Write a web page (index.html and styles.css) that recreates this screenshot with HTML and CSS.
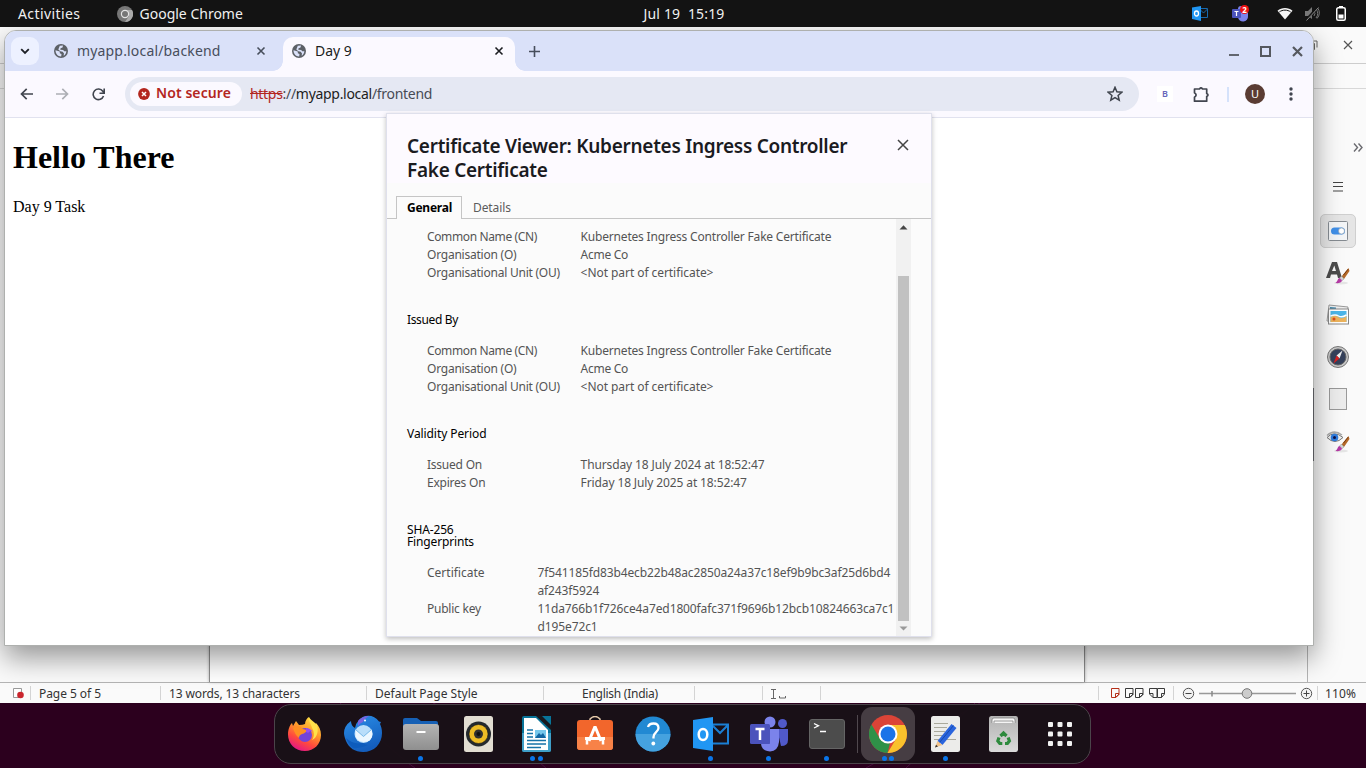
FILE: index.html
```html
<!DOCTYPE html>
<html lang="en">
<head>
<meta charset="utf-8">
<title>Desktop</title>
<link rel="stylesheet" href="styles.css">
</head>
<body>
<svg width="0" height="0" class="defs">
  <defs>
    <symbol id="globe" viewBox="0 0 14 14"><circle cx="7" cy="7" r="7" fill="#5c6066"/><path d="M1.500 6.300 5.800 7.400 5.800 9.200 7.500 10 7.200 12.400C4 12.500 1.500 10 1.500 6.300zM5.800 1.700 9 1.600 8.500 3.500 6.600 4.200 6.300 5.800 9.200 6 10.200 7.300 12.400 7.300C12 10 10.800 11.200 9.600 11.700L10 9.400 8.700 7.700 6.300 7.300 4.300 5.500z" fill="#dae1f9"/></symbol>
    <symbol id="x" viewBox="0 0 10 10"><path d="m1.500 1.500 7 7M8.500 1.500l-7 7" fill="none" stroke="currentColor" stroke-width="1.600"/></symbol>
    <symbol id="page" viewBox="0 0 9 11"><path d="M.5.500h7.500v6L5 9.500H.5zM8 5.500H4.500v4M8 6 4.500 9.500" fill="none" stroke="currentColor"/></symbol>
    <symbol id="brush" viewBox="0 0 14 16"><path d="M13 0 6 8.500l2.500 2.500 5.500-8z" fill="#b46a2a"/><path d="M12.800 1 8 7" stroke="#7b3d10"/><path d="m6 8-2 2 2.500 2.500L8.500 11z" fill="#d5d5d5" stroke="#888" stroke-width=".5"/><path d="M4 10c-2 .5-1.500 3-4 5 3 .5 6-.3 6.500-2.500z" fill="#b53aa5"/></symbol>
    <linearGradient id="fox" x1=".8" y1="0" x2=".3" y2="1"><stop offset="0" stop-color="#ffe646"/><stop offset=".4" stop-color="#ff9a2b"/><stop offset=".7" stop-color="#ff4a3d"/><stop offset="1" stop-color="#e2148a"/></linearGradient>
    <linearGradient id="bird" x1="0" y1="0" x2=".4" y2="1"><stop offset="0" stop-color="#2b8fe8"/><stop offset="1" stop-color="#145ebd"/></linearGradient>
    <linearGradient id="grey" x1="0" y1="0" x2="0" y2="1"><stop offset="0" stop-color="#b4b4b4"/><stop offset="1" stop-color="#8f8f8f"/></linearGradient>
    <linearGradient id="bin" x1="0" y1="0" x2="0" y2="1"><stop offset="0" stop-color="#b2b2b2"/><stop offset="1" stop-color="#dadada"/></linearGradient>
  </defs>
</svg>

<header class="topbar">
  <span class="top-activities">Activities</span>
  <svg class="top-chrome" width="16" height="16" viewBox="0 0 16 16"><circle cx="8" cy="8" r="8" fill="#777"/><path d="M8 4h7a8 8 0 0 1-7 12l4-6z" fill="#aaa"/><circle cx="8" cy="8" r="4.200" fill="#e5e5e5"/><circle cx="8" cy="8" r="3" fill="#777"/></svg>
  <span class="top-app">Google Chrome</span>
  <span class="top-clock">Jul 19&nbsp; 15:19</span>
  <div class="tray">
    <svg class="tray-outlook" width="16" height="15" viewBox="0 0 16 15"><path d="M7 2.500h8.500v9H7M7.500 3l4 4 4-4" fill="none" stroke="#1769ad"/><path d="M0 1.500 9 0v15L0 13z" fill="#2096f3"/><ellipse cx="4.500" cy="7.500" rx="2" ry="2.500" fill="none" stroke="#fff" stroke-width="1.300"/></svg>
    <svg class="tray-teams" width="17" height="17" viewBox="0 0 17 17"><circle cx="9" cy="4" r="3" fill="#7b83eb"/><path d="M6 6h10v5a5 5 0 0 1-10 1z" fill="#7b83eb"/><rect y="4" width="9" height="9" rx="1" fill="#4b53bc"/><path d="M2.500 6.500h4M4.500 6.500V11" stroke="#fff" stroke-width="1.200"/><circle cx="12.500" cy="4.500" r="4.500" fill="#ee1111"/><text x="12.500" y="7.500" class="badge">2</text></svg>
    <svg class="tray-wifi" width="16" height="13" viewBox="0 0 16 13"><path d="M.5 3.700C4.500 0 11.500 0 15.500 3.700L8 12.500z" fill="#f5f5f5"/><path d="M2.300 5C5.500 2.500 10.500 2.500 13.700 5" fill="none" stroke="#131313" stroke-width="1"/></svg>
    <svg class="tray-mute" width="15" height="15" viewBox="0 0 15 15"><path d="M0 5h3l4-4v12L3 10H0z" fill="#777"/><path d="M9 5q2 2.500 0 5M11 3q3.500 4.500 0 9M12.500 1.500q4 6-.5 11" fill="none" stroke="#777"/><path d="M1 14 13 1" stroke="#131313" stroke-width="2.500"/><path d="M1.500 14.500 13.500 1.500" stroke="#888"/></svg>
    <svg class="tray-battery" width="10" height="15" viewBox="0 0 10 15"><path d="M3 0h4v2H3z" fill="#fff"/><rect x=".75" y="1.750" width="8.500" height="12.500" rx="1.500" fill="none" stroke="#fff" stroke-width="1.500"/><path d="M2.500 8.500h5v4h-5z" fill="#fff"/></svg>
  </div>
</header>

<main class="desktop">
  <section class="writer">
    <div class="writer-title">
      <svg width="10" height="10" viewBox="0 0 10 10"><path d="M.5 3.500h6v6h-6zM2.500 1h6.500v6.500" fill="none" stroke="#666"/></svg>
      <svg class="writer-x" width="10" height="10" viewBox="0 0 10 10"><path d="m1 1 8 8M9 1 1 9" stroke="#555" stroke-width="1.200"/></svg>
    </div>
    <div class="writer-menu"></div>
    <div class="writer-main">
      <div class="canvas"><div class="sheet"></div></div>
      <aside class="sidebar">
        <svg class="side-more" width="10" height="9" viewBox="0 0 10 9"><path d="m1 .5 3.500 4L1 8.500M5.500.5l3.500 4-3.500 4" fill="none" stroke="#6b6b70" stroke-width="1.400"/></svg>
        <svg class="side-menu" width="10" height="10" viewBox="0 0 10 10"><path d="M0 .5h10M0 4.500h10M0 9h10" stroke="#444"/></svg>
        <div class="side-btn side-on"><svg width="20" height="20" viewBox="0 0 20 20"><rect x=".5" y=".5" width="19" height="19" rx="1" fill="#f3f5f7" stroke="#858b91"/><rect x="3" y="6.500" width="14" height="7" rx="3.500" fill="#3f8fe8"/><circle cx="13.500" cy="10" r="3" fill="#fff" stroke="#8a9aaa" stroke-width=".6"/></svg></div>
        <div class="side-btn"><svg width="24" height="24" viewBox="0 0 24 24"><ellipse cx="15" cy="22" rx="7" ry="1.500" fill="#e5e5e5"/><path d="M0 17 6 1h5l5 16h-4l-1-3.500H5L4 17zM6 10h4L8.300 4.500z" fill="#4c4c4c"/><use href="#brush" x="9" y="7" width="15" height="16"/></svg></div>
        <div class="side-btn"><svg width="24" height="22" viewBox="0 0 24 22"><path d="M3 1 22 3l-2 16L1 17z" fill="#eee" stroke="#999"/><path d="m4 3 6 .5v4H4z" fill="#4089ae"/><rect x="2.500" y="5" width="20" height="15" fill="#fff" stroke="#888"/><rect x="4.500" y="7" width="16" height="11" fill="#4bb5e8"/><path d="M4.500 13q5-3 8 0t8-1v6h-16z" fill="#ecb35c"/><path d="M4.500 12q5-2 8 0t8-1" fill="none" stroke="#fff" stroke-width="1.500"/><circle cx="8" cy="15" r="1.500" fill="#df4b1c"/></svg></div>
        <div class="side-btn"><svg width="22" height="22" viewBox="0 0 22 22"><circle cx="11" cy="11" r="10.500" fill="#c9c9c9" stroke="#777"/><circle cx="11" cy="11" r="8" fill="#35415b" stroke="#666"/><path d="m15.500 4.500-6 5 3 3z" fill="#eee"/><path d="m6.500 17.500 3-8 3 3z" fill="#d92020"/></svg></div>
        <div class="side-btn"><svg width="18" height="22" viewBox="0 0 18 22"><rect x=".5" y=".5" width="17" height="21" fill="#ececec" stroke="#999"/></svg></div>
        <div class="side-btn"><svg width="24" height="24" viewBox="0 0 24 24"><ellipse cx="15" cy="22" rx="7" ry="1.500" fill="#e5e5e5"/><path d="M1 8.500Q8 1 17 8.500q-8 8-16 0z" fill="#eee" stroke="#777"/><path d="M1 6.500Q8 0 16 6" fill="none" stroke="#aaa" stroke-width="1.500"/><circle cx="8.500" cy="8.500" r="3.800" fill="#2e7de0"/><circle cx="8.500" cy="8.500" r="1.500" fill="#114"/><use href="#brush" x="9" y="7" width="15" height="16"/></svg></div>
      </aside>
    </div>
    <footer class="status">
      <div class="st st-a"><svg width="11" height="11" viewBox="0 0 11 11"><path d="M.5 .5h8v9h-8z" fill="#fff" stroke="#999"/><circle cx="7.500" cy="7" r="3.300" fill="#c9252d"/></svg></div>
      <div class="st st-b">Page 5 of 5</div>
      <div class="st st-c">13 words, 13 characters</div>
      <div class="st st-d">Default Page Style</div>
      <div class="st st-e">English (India)</div>
      <div class="st st-f"></div>
      <div class="st st-g"><svg width="16" height="10" viewBox="0 0 16 10"><path d="M0 .5h5M2.500.5v9M0 9.500h5M8.500 7v2h6V7" fill="none" stroke="#666"/></svg></div>
      <div class="st st-h"></div>
      <div class="st st-i">
        <svg class="pg-red" width="9" height="11"><use href="#page"/></svg>
        <svg width="9" height="11"><use href="#page"/></svg>
        <svg width="9" height="11"><use href="#page"/></svg>
        <svg class="pg-book" width="17" height="11" viewBox="0 0 17 11"><path d="M8 .5H.5v5.500L4 9.500h4zM8.500.5h7v5.500L12.500 9.500h-4zM.5 5.500H4v4M15.500 5.500H12.500v4" fill="none" stroke="currentColor"/></svg>
      </div>
      <div class="st st-j">
        <svg width="131" height="13" viewBox="0 0 131 13"><g fill="#f2f2f2" stroke="#555"><circle cx="6.500" cy="6.500" r="5.200"/><circle cx="124.500" cy="6.500" r="5.200"/></g><path d="M3.500 6.500h6M121.500 6.500h6M124.500 3.500v6" stroke="#444"/><path d="M17 6.500h97" stroke="#999" stroke-width="1.500"/><path d="M30 4v5.500" stroke="#888" stroke-width="1.500"/><circle cx="65" cy="6.500" r="4.800" fill="#ccc" stroke="#777"/></svg>
      </div>
      <div class="st st-k">110%</div>
    </footer>
  </section>

  <section class="chrome">
    <div class="tabstrip">
      <div class="tabsearch"><svg width="10" height="7" viewBox="0 0 10 7"><path d="m1.200 1.200 3.800 3.800 3.800-3.800" fill="none" stroke="#1d2026" stroke-width="1.800"/></svg></div>
      <div class="tab">
        <svg width="14" height="14"><use href="#globe"/></svg>
        <span class="tab-title t1">myapp.local/backend</span>
        <svg class="tab-x" width="10" height="10"><use href="#x"/></svg>
      </div>
      <div class="tab tab-active">
        <svg width="14" height="14"><use href="#globe"/></svg>
        <span class="tab-title t2">Day 9</span>
        <svg class="tab-x" width="10" height="10"><use href="#x"/></svg>
      </div>
      <svg class="newtab" width="11" height="11" viewBox="0 0 11 11"><path d="M5.500 0v11M0 5.500h11" stroke="#474e5c" stroke-width="1.600"/></svg>
      <div class="winbtns">
        <svg width="10" height="12" viewBox="0 0 10 12"><path d="M0 10h10" stroke="#55585f" stroke-width="1.800"/></svg>
        <svg width="11" height="11" viewBox="0 0 11 11"><path d="M1 1h9v9H1z" fill="none" stroke="#55585f" stroke-width="2"/></svg>
        <svg width="11" height="11" viewBox="0 0 11 11"><path d="m1 1 9 9M10 1l-9 9" stroke="#55585f" stroke-width="2.200"/></svg>
      </div>
    </div>
    <div class="toolbar">
      <svg class="nav-back" width="13" height="12" viewBox="0 0 13 12"><path d="M13 6H1.500M6.700.8 1.500 6l5.200 5.200" fill="none" stroke="#41454f" stroke-width="1.700"/></svg>
      <svg class="nav-fwd" width="13" height="12" viewBox="0 0 13 12"><path d="M0 6h11.500M6.300.8 11.500 6l-5.200 5.200" fill="none" stroke="#adafb5" stroke-width="1.700"/></svg>
      <svg class="nav-reload" width="13" height="13" viewBox="0 0 13 13"><path d="M11.500 8A5.300 5.300 0 1 1 10.800 3.200L12 4.700M12.200.5v4.700H7.500" fill="none" stroke="#41454f" stroke-width="1.600"/></svg>
      <div class="omnibox">
        <div class="chip"><svg width="12" height="12" viewBox="0 0 12 12"><circle cx="6" cy="6" r="5.900" fill="#b3261e"/><path d="m4 4 4 4M8 4 4 8" stroke="#fff" stroke-width="1.500"/></svg><span>Not secure</span></div>
        <div class="url"><s>https</s>://<b>myapp.local</b>/frontend</div>
        <svg class="star" width="16" height="16" viewBox="0 0 16 16"><path d="m8 1.300 1.900 4.500 4.900.4-3.700 3.200 1.100 4.700L8 11.600l-4.200 2.500 1.100-4.700L1.200 6.200l4.900-.4z" fill="none" stroke="#3f444d" stroke-width="1.500"/></svg>
      </div>
      <div class="ext">B</div>
      <svg class="puzzle" width="17" height="17" viewBox="0 0 17 17"><path d="M1.500 3h5Q8 .8 9.500 3h4.200v4.500q2.600 1.500 0 3v4.700H1.500v-4q3.200-2.200 0-4.500z" fill="none" stroke="#41454f" stroke-width="1.700" stroke-linejoin="round"/></svg>
      <div class="tool-sep"></div>
      <div class="avatar">U</div>
      <svg class="kebab" width="4" height="14" viewBox="0 0 4 14"><g fill="#41454f"><circle cx="2" cy="2" r="1.700"/><circle cx="2" cy="7" r="1.700"/><circle cx="2" cy="12" r="1.700"/></g></svg>
    </div>
    <div class="webpage">
      <h1>Hello There</h1>
      <p>Day 9 Task</p>
    </div>

    <div class="dialog">
      <div class="dlg-head">
        <h2>Certificate Viewer: Kubernetes Ingress Controller<br>Fake Certificate</h2>
        <svg class="dlg-x" width="12" height="12" viewBox="0 0 12 12"><path d="m1 1 10 10M11 1 1 11" stroke="#444" stroke-width="1.500"/></svg>
      </div>
      <div class="dlg-tabs"><div class="dtab dtab-on">General</div><div class="dtab">Details</div></div>
      <div class="dlg-body">
        <div class="cert">
          <dl class="rows">
            <dt class="cn">Common Name (CN)</dt><dd class="kube">Kubernetes Ingress Controller Fake Certificate</dd>
            <dt class="org">Organisation (O)</dt><dd class="acme">Acme Co</dd>
            <dt class="ou">Organisational Unit (OU)</dt><dd>&lt;Not part of certificate&gt;</dd>
          </dl>
          <h3 class="issued">Issued By</h3>
          <dl class="rows">
            <dt class="cn">Common Name (CN)</dt><dd class="kube">Kubernetes Ingress Controller Fake Certificate</dd>
            <dt class="org">Organisation (O)</dt><dd class="acme">Acme Co</dd>
            <dt class="ou">Organisational Unit (OU)</dt><dd>&lt;Not part of certificate&gt;</dd>
          </dl>
          <h3>Validity Period</h3>
          <dl class="rows">
            <dt class="org">Issued On</dt><dd class="date">Thursday 18 July 2024 at 18:52:47</dd>
            <dt class="org">Expires On</dt><dd class="date">Friday 18 July 2025 at 18:52:47</dd>
          </dl>
          <h3 class="sha">SHA-256<br>Fingerprints</h3>
          <dl class="rows rows-sha">
            <dt>Certificate</dt><dd class="hash">7f541185fd83b4ecb22b48ac2850a24a37c18ef9b9bc3af25d6bd4<br>af243f5924</dd>
            <dt class="org">Public key</dt><dd class="hash">11da766b1f726ce4a7ed1800fafc371f9696b12bcb10824663ca7c1<br>d195e72c1</dd>
          </dl>
        </div>
        <div class="scroll">
          <svg width="9" height="5" viewBox="0 0 9 5"><path d="M4.500.3 8.500 4.500h-8z" fill="#444"/></svg>
          <div class="thumb"></div>
          <svg width="9" height="5" viewBox="0 0 9 5"><path d="M4.500 4.500.5.5h8z" fill="#999"/></svg>
        </div>
      </div>
    </div>
  </section>
  <div class="edge"></div>
</main>

<div class="shelf">
  <svg class="rays" width="1366" height="65" viewBox="0 0 1366 65"><g fill="none" stroke="#5d1553"><path d="M340 0q60 55 75 65M433 0q80 35 113 65M980 0 866 65M975 0 906 65"/></g></svg>
  <nav class="dock">
    <div class="app"><svg width="36" height="36" viewBox="0 0 36 36"><path d="M18 35C8 35 1 27.500 1 18.500 1 13 3 9 5 7l1 3 3-5 3 4q4 0 6-1c0-3 2-6 4-7 0 3 4 5 6 8l1-2c3 3 5 7 5 12 0 9-7 16-16 16z" fill="url(#fox)"/><path d="M22 1c-1 5 2 6 3 11 2 3 3 8 0 12 5-2 7-9 5-15-2-3-7-5-8-8z" fill="#ffe14a"/><circle cx="18" cy="19" r="7" fill="#7443d8"/><path d="M6 12q6-4 10 1l4 1q-1 3-5 4-3 1-3 4-4-3-6-10z" fill="#ff8f22"/><path d="M19 12q4 0 7 4-1-1-3-1-1 3-4 1z" fill="#9a4cf0"/></svg></div>
    <div class="app"><svg width="38" height="38" viewBox="0 0 38 38"><path d="M7 6Q0 11 0 18c0 3 1 5 2 8 3 7 9 11 17 11 11 0 19-8 19-19 0-4-1-7-2-9l1-2-2-.5C30-1 20-1 15 5q-3 3-4 8-4-2-4-7z" fill="url(#bird)"/><path d="M14 6q4-5 11-5-5 3-6 6-3 1-5 4z" fill="#7864df"/><circle cx="19.500" cy="19" r="9" fill="#b9defa"/><path d="m11.500 14.500 8 7 8-7q3 9-4 12-9 2-12-5z" fill="#edf8ff"/><path d="m11.500 14.500 8 7 8-7" fill="none" stroke="#76b8e9"/><path d="M2 23q7 7 17 5 2 2 5 2-8 4-15 3-5-4-7-10z" fill="#0e5cbc"/><circle cx="21" cy="5.500" r="1" fill="#fff"/></svg></div>
    <div class="app"><svg width="36" height="34" viewBox="0 0 36 34"><path d="M0 3q0-2 2-2h12l4 3h15q2 0 2 2v8H0z" fill="#1660b5"/><rect y="7" width="36" height="26" rx="3" fill="url(#grey)"/><path d="M13.500 15h9" stroke="#fff" stroke-width="2"/></svg><i></i></div>
    <div class="app"><svg width="29" height="36" viewBox="0 0 29 36"><rect width="29" height="36" rx="2.500" fill="#e2ded2"/><circle cx="14.500" cy="18" r="12.500" fill="#242a2e"/><circle cx="14.500" cy="18" r="9.500" fill="#edbc25" stroke="#111" stroke-width=".5"/><circle cx="14.500" cy="18" r="4.500" fill="#303030"/><circle cx="14.500" cy="18" r="2" fill="#111"/></svg></div>
    <div class="app"><svg width="29" height="36" viewBox="0 0 29 36"><path d="M2 0h25q2 0 2 2v32q0 2-2 2H2q-2 0-2-2V2q0-2 2-2z" fill="#087499"/><path d="M0 17h29v17q0 2-2 2H2q-2 0-2-2z" fill="#3f9fc8"/><path d="M2 2h12l12 12v20H2z" fill="#fff"/><path d="M14 0h6l9 9v5z" fill="#17191e"/><path d="M21 0h8v8z" fill="#087499"/><path d="M5 14h6M5 17.500h6M5 21h6M5 24.500h19M5 28h19M5 31.500h14" stroke="#1673a8" stroke-width="1.400"/><rect x="13" y="14" width="11" height="8" fill="#75c7eb"/><path d="m13 22 4-5 2 2 2-2 3 5z" fill="#1266a2"/></svg><i></i><i></i></div>
    <div class="app"><svg width="36" height="36" viewBox="0 0 36 36"><path d="M13 6V3q5-5 10 0v3" fill="none" stroke="#e5c9aa" stroke-width="1.500"/><rect y="4" width="36" height="30" rx="3" fill="#f2662c"/><path d="M0 21h36v10q0 3-3 3H3q-3 0-3-3z" fill="#f78248"/><g fill="none" stroke="#fff" stroke-width="3"><path d="M18 10.500 12 25M18 10.500 24 25M8 22.500h20"/><path d="M10 24v4.500M26 24v4.500" stroke-width="2.500"/></g></svg></div>
    <div class="app"><svg width="36" height="36" viewBox="0 0 36 36"><circle cx="18" cy="18" r="17.500" fill="#2189d3"/><path d="M.5 18h35a17.500 17.500 0 0 1-35 0z" fill="#45a2df"/><path d="M13 11q1-3.500 5.500-3.500 5 0 5 4.500c0 4-5 4.500-5 9v1.500" fill="none" stroke="#fff" stroke-width="2.300"/><circle cx="18.300" cy="27.500" r="1.900" fill="#fff"/></svg></div>
    <div class="app"><svg width="36" height="34" viewBox="0 0 36 34"><path d="M18 7.500h17v19H18M20 9l7 7 8-8" fill="none" stroke="#1b7fd4" stroke-width="2"/><path d="M0 3 20 0v34L0 31z" fill="#2196f3"/><ellipse cx="10" cy="17.500" rx="4.300" ry="5.500" fill="none" stroke="#fff" stroke-width="2.500"/></svg><i></i></div>
    <div class="app"><svg width="38" height="36" viewBox="0 0 38 36"><circle cx="20" cy="6" r="5.500" fill="#7b83eb"/><circle cx="32.500" cy="7.500" r="4.500" fill="#5059c9"/><path d="M27 13h11v11q0 6-7 6z" fill="#5059c9"/><path d="M11 13h18v13q-1 9-9 9.500-9-.5-9-9z" fill="#7b83eb"/><path d="M11 13h9v15h-9z" fill="#5f66c9"/><rect y="8" width="20" height="20" rx="1.500" fill="#4b53bc"/><path d="M5.500 13h9M10 13v11" stroke="#fff" stroke-width="2.500"/></svg><i></i></div>
    <div class="app"><svg width="36" height="30" viewBox="0 0 36 30"><rect x=".5" y=".5" width="35" height="29" rx="2.500" fill="#4c4c4c" stroke="#656565"/><path d="m5 4.500 4.500 2.300L5 9M11 12.500h6" fill="none" stroke="#fff" stroke-width="1.300"/></svg><i></i></div>
    <div class="dock-sep"></div>
    <div class="app app-on"><svg width="38" height="38" viewBox="0 0 38 38"><circle cx="19" cy="19" r="19" fill="#db4437"/><path d="M2.500 9.500 11 24q4 5 10 4l-2.500 10A19 19 0 0 1 2.500 9.500z" fill="#2f9148"/><path d="M19 10h16.700A19 19 0 0 1 18.500 38L27 24z" fill="#f9c12c"/><circle cx="19" cy="19" r="9.500" fill="#fff"/><circle cx="19" cy="19" r="7.500" fill="#1a73e8"/></svg><i></i><i></i></div>
    <div class="app"><svg width="29" height="36" viewBox="0 0 29 36"><rect width="29" height="36" rx="2.500" fill="#ececea"/><path d="M3 7.500h14M3 11.500h13M3 15.500h11M3 19.500h9M3 23.500h22" stroke="#aaa99c"/><path d="m20.500 8 5 4-14 17-5-4z" fill="#2b65dd"/><path d="m22.500 9.500-14 17" stroke="#174aaa"/><path d="m6.500 25 5 4-7.500 2.500z" fill="#f0c28b"/><path d="M4 31.500 5 28.800l2 1.600z" fill="#333"/></svg><i></i></div>
    <div class="app"><svg width="29" height="36" viewBox="0 0 29 36"><rect width="29" height="36" rx="2.500" fill="url(#bin)"/><path d="M3 7V4q0-2 2-2h19q2 0 2 2v3M5 7V5h19v2" fill="#f5f5f5" stroke="#777" stroke-width=".7"/><g fill="none" stroke="#2d8a3d" stroke-width="3.200"><path d="m11.500 20 3-3 3 3M10 21.500 8.800 25l2 2.500h2.500M19.200 21.500l1.200 3.500-2 2.500H16"/></g></svg></div>
    <div class="app app-grid"><svg width="24" height="24" viewBox="0 0 24 24"><g fill="#f2f2f2"><rect width="5" height="5" rx="1"/><rect x="9.500" width="5" height="5" rx="1"/><rect x="19" width="5" height="5" rx="1"/><rect y="9.500" width="5" height="5" rx="1"/><rect x="9.500" y="9.500" width="5" height="5" rx="1"/><rect x="19" y="9.500" width="5" height="5" rx="1"/><rect y="19" width="5" height="5" rx="1"/><rect x="9.500" y="19" width="5" height="5" rx="1"/><rect x="19" y="19" width="5" height="5" rx="1"/></g></svg></div>
  </nav>
</div>
</body>
</html>
```
FILE: styles.css
```css
* { box-sizing: border-box; }
body { margin: 0; width: 1366px; height: 768px; overflow: hidden; background: #2c001e; font-family: "Noto Sans", "Open Sans", sans-serif; }
svg { display: block; flex: none; }
.defs { position: absolute; }

.topbar { height: 27px; background: #131313; color: #f0f0f0; font-size: 14px; line-height: 27px; display: flex; align-items: center; padding-left: 18px; white-space: nowrap; }
.top-activities { letter-spacing: .4px; width: 99px; }
.top-chrome { margin-right: 6.5px; }
.top-app { width: 504px; }
.top-clock { letter-spacing: .17px; margin-bottom: 1px; }
.tray { margin-left: auto; display: flex; align-items: center; padding-right: 20px; }
.tray-teams { margin-left: 24px; margin-top: -1px; }
.tray-wifi { margin-left: 28px; }
.tray-mute { margin-left: 12px; }
.tray-battery { margin-left: 16px; margin-top: -1px; }
.badge { font: 700 8px "Noto Sans", sans-serif; fill: #fff; text-anchor: middle; }

.desktop { position: relative; height: 676px; overflow: hidden; }
.writer { height: 676px; display: flex; flex-direction: column; background: #fafafa; }
.writer-title { height: 37px; border-bottom: 1px solid #cdcdcd; display: flex; align-items: center; justify-content: flex-end; gap: 25px; padding-right: 13px; }
.writer-menu { height: 25px; border-bottom: 1px solid #d8d8d8; }
.writer-main { flex: 1; display: flex; border-bottom: 1px solid #b4b4b4; }
.canvas { width: 1308px; border-right: 1px solid #b4b4b4; display: flex; }
.sheet { margin-left: 209px; width: 876px; background: #fff; border: solid #8b8b8b; border-width: 0 1px; box-shadow: 0 0 3px rgba(0,0,0,.3); }
.sidebar { width: 58px; display: flex; flex-direction: column; align-items: center; padding: 54px 0 0 2px; gap: 8px; }
.side-more { align-self: flex-end; margin-right: 3px; }
.side-menu { margin: 22px 0 14px; }
.side-btn { width: 36px; height: 34px; display: flex; align-items: center; justify-content: center; }
.side-on { background: #e5e5e5; border: 1px solid #cfcfcf; border-radius: 5px; }

.status { height: 20px; display: flex; font-size: 12px; line-height: 20px; color: #333; white-space: nowrap; }
.st { padding: 1px 0 0 8px; display: flex; align-items: center; }
.st:not(:last-child) { background: linear-gradient(#d4d4d4, #d4d4d4) right 3px / 1px 14px no-repeat; }
.st-a { width: 31px; padding-left: 13px; }
.st-b { width: 130px; letter-spacing: -.06px; }
.st-c { width: 206px; letter-spacing: -.11px; }
.st-d { width: 177px; }
.st-e { width: 151px; padding-left: 38px; letter-spacing: -.26px; }
.st-f { width: 68px; }
.st-g { width: 58px; }
.st-h { width: 278px; }
.st-i { width: 75px; padding-left: 12px; gap: 1px; color: #3a3a3a; }
.pg-red { color: #b5301a; margin-right: 4px; }
.pg-book { margin-left: 4px; }
.st-j { width: 144px; padding-left: 8px; }
.st-k { width: 48px; padding-left: 7px; letter-spacing: .1px; }

.chrome { position: absolute; left: 4px; top: 3px; width: 1310px; height: 616px; background: #fff; border: 1px solid #aeb0ae; border-radius: 12px 12px 0 0; box-shadow: 0 12px 28px rgba(0,0,0,.4); }
.edge { position: absolute; left: 1313px; top: 361px; width: 1px; height: 73px; background: #55565a; }
.tabstrip { height: 40px; background: #dae1f9; border-radius: 11px 11px 0 0; display: flex; align-items: center; padding: 6px 10px 0 6px; }
.tabsearch { width: 28px; height: 28px; border-radius: 9px; background: #edf1ff; display: flex; align-items: center; justify-content: center; margin-bottom: 6px; }
.tab { position: relative; height: 34px; display: flex; align-items: center; width: 229px; padding: 0 17px 6px 0; margin-left: 15px; color: #474e5c; font-size: 14px; }
.tab-active { background: #fbf9ff; border-radius: 10px 10px 0 0; margin-left: 0; width: 232px; padding: 0 11px 6px 9px; color: #1c1d21; }
.tab-active::before, .tab-active::after { content: ""; position: absolute; bottom: 0; width: 10px; height: 10px; }
.tab-active::before { left: -10px; background: radial-gradient(circle at 0 0, transparent 9.500px, #fbf9ff 10px); }
.tab-active::after { right: -10px; background: radial-gradient(circle at 100% 0, transparent 9.500px, #fbf9ff 10px); }
.tab-title { margin: 0 0 2px 9px; }
.t1 { letter-spacing: .17px; }
.tab-x { margin-left: auto; }
.newtab { margin: 0 0 6px 14px; }
.winbtns { margin-left: auto; display: flex; gap: 21px; align-items: center; margin-bottom: 6px; }
.toolbar { height: 47px; background: #fbf9ff; border-bottom: 1px solid #e1e2ef; display: flex; align-items: center; padding: 0 20px 0 15px; }
.nav-fwd { margin-left: 23px; }
.nav-reload { margin-left: 23px; }
.omnibox { margin-left: 20px; width: 1014px; height: 34px; border-radius: 17px; background: #e5e8f3; display: flex; align-items: center; padding: 0 16px 0 5px; }
.chip { width: 112px; height: 24px; border-radius: 12px; background: #fbf9ff; display: flex; align-items: center; gap: 6px; padding-left: 8px; color: #b3261e; font-size: 14px; font-weight: 600; line-height: 20px; letter-spacing: .08px; white-space: nowrap; }
.chip span { margin-bottom: 2px; }
.url { margin: 0 0 2px 8px; font-size: 14px; letter-spacing: -.3px; color: #474b55; flex: 1; }
.url s { color: #b3261e; }
.url b { font-weight: 400; color: #1c1d21; }
.ext { margin-left: 18px; width: 16px; height: 16px; background: #fff; color: #6765ba; font-size: 9px; font-weight: 600; line-height: 16px; text-align: center; }
.puzzle { margin-left: 20px; }
.tool-sep { width: 2px; height: 15px; background: #d5e2fb; margin-left: 17px; }
.avatar { margin-left: 16px; width: 20px; height: 20px; border-radius: 50%; background: #5a3c33; color: #fff; font-size: 11px; line-height: 20px; text-align: center; }
.kebab { margin-left: auto; }
.webpage { padding: 21px 8px 0; font-family: "Liberation Serif", serif; color: #000; }
.webpage h1 { margin: 0 0 22px; font-size: 32px; line-height: 37px; }
.webpage p { margin: 0; font-size: 16px; line-height: 18px; }

.dialog { position: absolute; left: 381px; top: 82px; width: 546px; height: 524px; background: #fbfbfb; border: 1px solid #dfe0ec; box-shadow: 0 2px 5px rgba(0,0,0,.25); display: flex; flex-direction: column; }
.dlg-head { height: 69px; background: #fdfaff; display: flex; justify-content: space-between; padding: 20px 22px 0 20px; }
.dlg-head h2 { margin: 0; font-size: 19px; font-weight: 600; line-height: 24px; letter-spacing: -.28px; color: #1b1b1f; white-space: nowrap; }
.dlg-x { margin-top: 5px; }
.dlg-tabs { height: 36px; padding: 13px 0 0 9px; display: flex; border-bottom: 1px solid #c5c5c5; }
.dtab { height: 23px; padding: 1px 11px 0; font-size: 12px; line-height: 22px; letter-spacing: -.08px; color: #5c5c5c; }
.dtab-on { width: 66px; padding: 0 10px; border: 1px solid #c5c5c5; border-bottom: 0; background: #fbfbfb; color: #000; font-weight: 700; letter-spacing: -.24px; }
.dlg-body { flex: 1; min-height: 0; display: flex; overflow: hidden; }
.cert { width: 509px; padding: 9px 0 0 20px; font-size: 12px; }
.rows { margin: 0; padding-left: 20px; display: grid; grid-template-columns: 153.6px 1fr; line-height: 18px; color: #545454; white-space: nowrap; }
.rows-sha { grid-template-columns: 110.500px 1fr; }
.rows dd { margin: 0; letter-spacing: -.06px; }
.rows .cn { letter-spacing: -.37px; }
.rows .org { letter-spacing: -.23px; }
.rows .ou { letter-spacing: -.23px; }
.rows .kube { letter-spacing: -.19px; }
.rows .acme { letter-spacing: -.27px; }
.rows .date { letter-spacing: -.12px; }
.rows .hash { letter-spacing: -.12px; }
.cert h3 { margin: 32px 0 16px; font-size: 12px; line-height: 12px; font-weight: 400; color: #000; letter-spacing: -.08px; }
.cert .issued { letter-spacing: -.35px; }
.cert .sha { letter-spacing: -.15px; }
.scroll { width: 15px; background: #f1f1f1; display: flex; flex-direction: column; align-items: center; padding: 6px 0; }
.thumb { width: 11px; height: 345px; margin: 46px 0 5px; background: #c1c1c1; flex: none; }

.shelf { position: relative; height: 65px; padding: 1px 0 0 274px; }
.rays { position: absolute; left: 0; top: 0; opacity: .6; }
.dock { position: relative; width: 817px; height: 60px; border: 1px solid #4b444a; border-radius: 17px; background: rgba(25,17,23,.96); display: flex; align-items: center; padding-left: 1px; }
.app { position: relative; width: 58px; height: 54px; display: flex; align-items: center; justify-content: center; }
.app svg { margin-right: 1px; }
.app i { position: absolute; bottom: 0; left: 26px; width: 5px; height: 5px; border-radius: 50%; background: #0a75e8; }
.app i:nth-of-type(1):not(:last-child) { left: 22px; }
.app i + i { left: 30px; }
.dock-sep { width: 3px; height: 38px; background: linear-gradient(90deg, transparent 1px, #50484e 1px, #50484e 2px, transparent 2px); }
.app-on { background: #463d43; border-radius: 11px; width: 54px; margin: 0 2px; }
.app-on svg { margin-right: 0; }
.app-on i:nth-of-type(1):not(:last-child) { left: 21px; }
.app-on i + i { left: 28px; }
.app-grid { width: 54px; }
```
